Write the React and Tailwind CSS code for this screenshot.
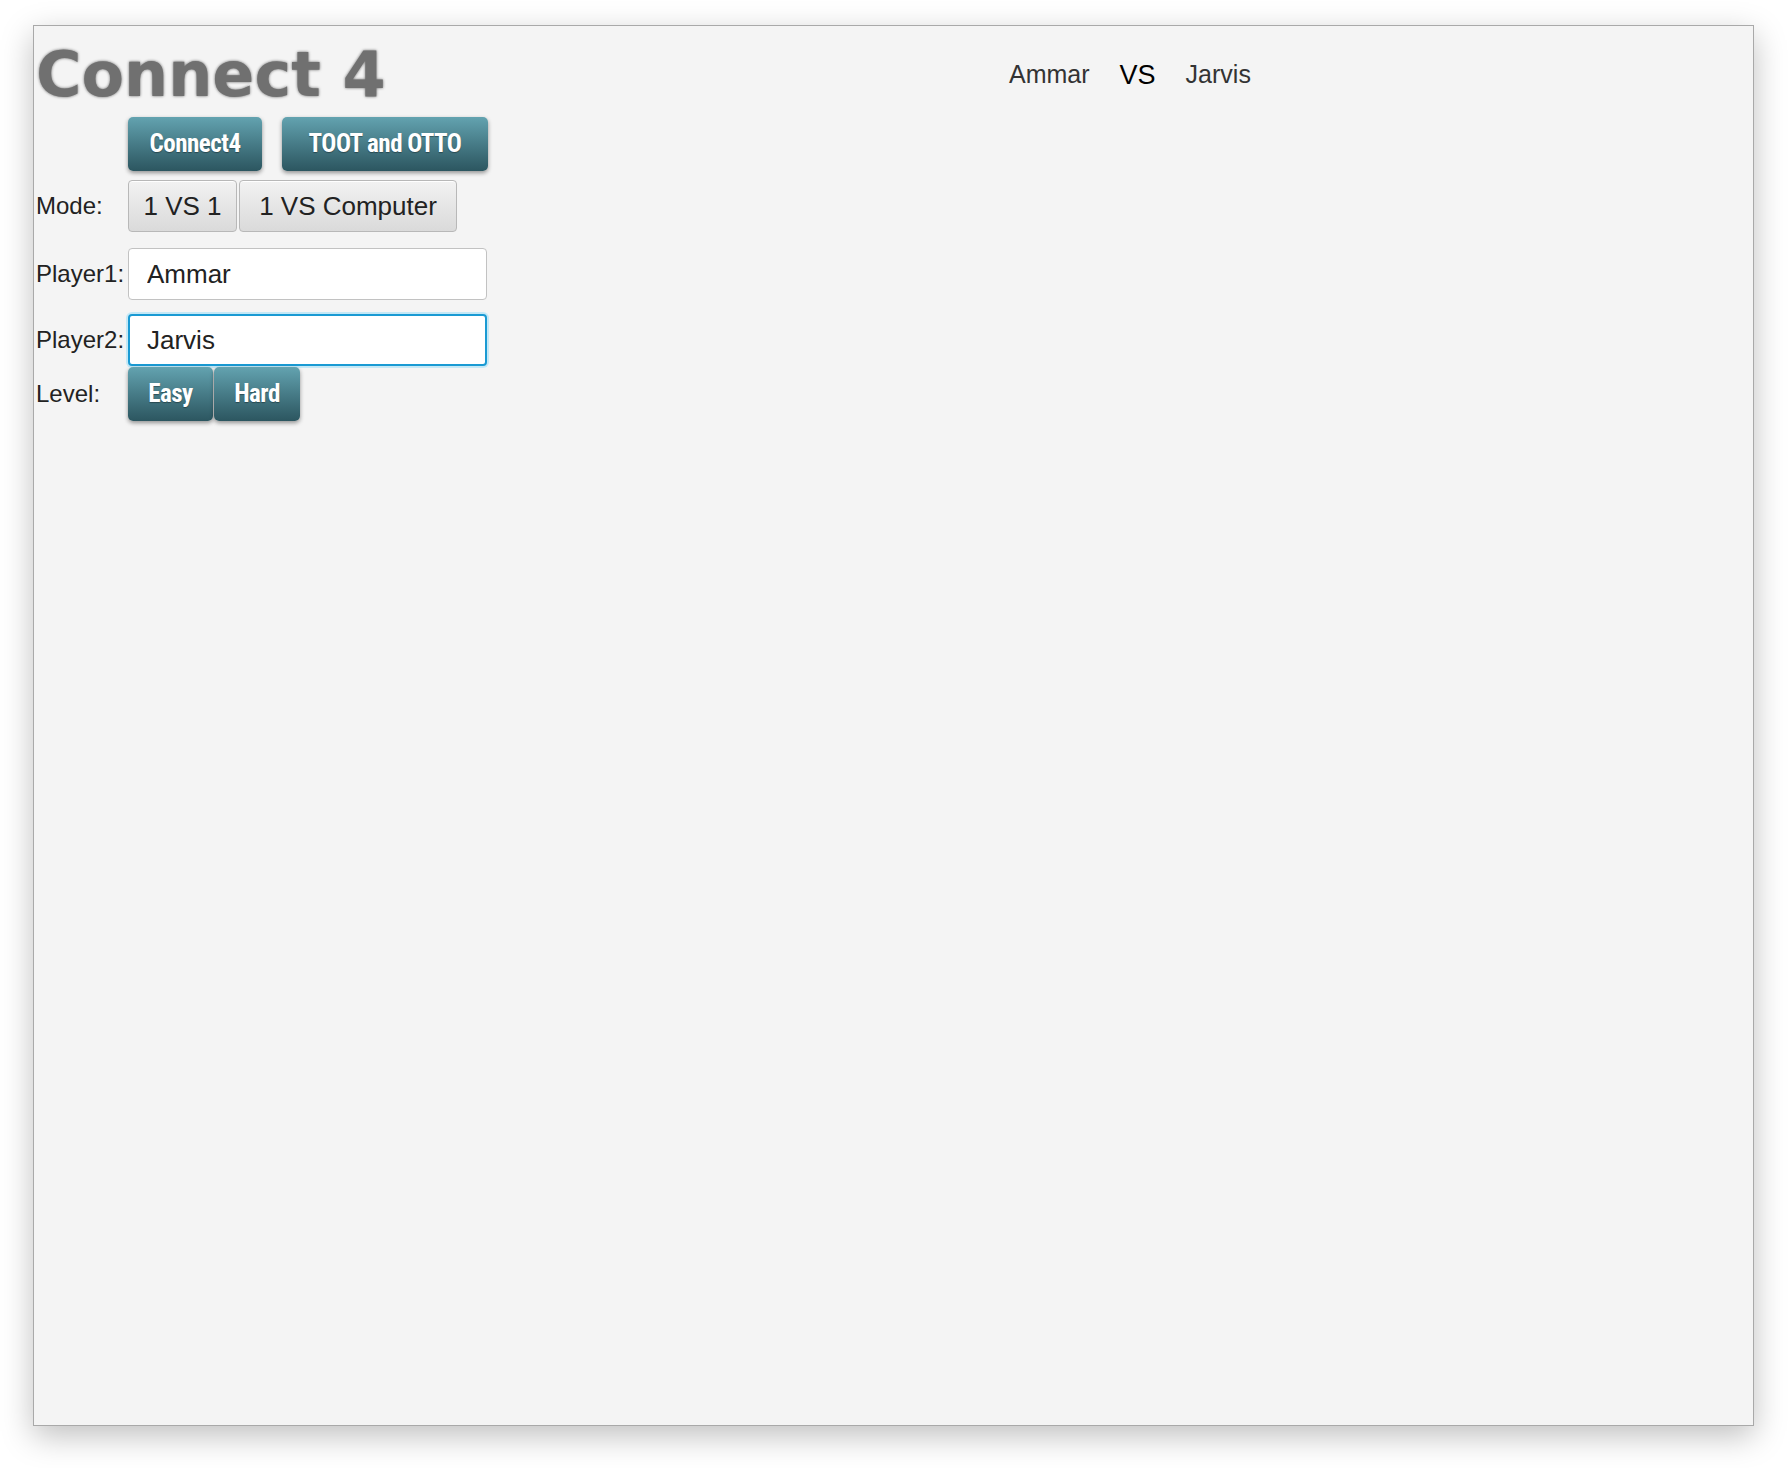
import { useState } from "react";

const tealBtn =
  "h-[54px] rounded-[5px] bg-gradient-to-b from-[#63a3b0] to-[#2c5660] text-white font-bold text-[25px] tracking-[-0.5px] shadow-[0_2px_4px_rgba(0,0,0,0.4)] [text-shadow:0_1px_1px_rgba(0,0,0,0.35)] font-['Liberation_Sans_Narrow','Roboto_Condensed','Liberation_Sans',sans-serif]";

const grayBtn =
  "h-[52px] rounded-[4px] border border-[#b8b8b8] bg-gradient-to-b from-[#f2f2f2] to-[#dadada] text-[#222] text-[26px] whitespace-nowrap shadow-[inset_0_1px_0_#fff]";

const App = () => {
    const [player1, setPlayer1] = useState("Ammar");
    const [player2, setPlayer2] = useState("Jarvis");

    return (
        <div className="min-h-screen bg-white font-['Liberation_Sans',Arial,sans-serif]">
            <div className="ml-[33px] pt-[25px]">
                <div className="w-[1721px] h-[1401px] border border-[#a9a9a9] bg-[#f4f4f4] shadow-[0_10px_30px_rgba(0,0,0,0.25)] pl-[2px]">
                    {/* header */}
                    <div className="mt-[18px] flex items-center">
                        <div className="w-[973px] h-[62px] leading-none text-[62px] font-bold text-[#707070] font-['DejaVu_Sans',sans-serif] [text-shadow:0_0_3px_rgba(0,0,0,0.6)]">
                            Connect 4
                        </div>
                        <div className="flex items-center gap-[30px] text-[25px] text-[#333]">
                            <span>Ammar</span>
                            <span className="text-[27px] text-black">VS</span>
                            <span>Jarvis</span>
                        </div>
                    </div>

                    {/* game buttons */}
                    <div className="mt-[11px] pl-[92px] flex gap-[20px]">
                        <button className={`${tealBtn} w-[134px]`}>Connect4</button>
                        <button className={`${tealBtn} w-[206px]`}>TOOT and OTTO</button>
                    </div>

                    {/* mode */}
                    <div className="mt-[9px] flex items-center text-[24px] text-[#222]">
                        <span className="w-[92px]">Mode:</span>
                        <div className="flex gap-[2px]">
                            <button className={`${grayBtn} w-[109px]`}>1 VS 1</button>
                            <button className={`${grayBtn} w-[218px]`}>1 VS Computer</button>
                        </div>
                    </div>

                    <div className="mt-[16px] flex items-center text-[24px] text-[#222]">
                        <span className="w-[92px]">Player1:</span>
                        <input
                            value={player1}
                            onChange={(e) => setPlayer1(e.target.value)}
                            className="w-[359px] h-[52px] rounded-[4px] border border-[#c2c2c2] bg-white px-[18px] text-[26px] text-[#222] outline-none"
                        />
                    </div>

                    <div className="mt-[14px] flex items-center text-[24px] text-[#222]">
                        <span className="w-[92px]">Player2:</span>
                        <input
                            value={player2}
                            onChange={(e) => setPlayer2(e.target.value)}
                            className="w-[359px] h-[52px] rounded-[4px] border-2 border-[#1a9ad3] bg-white px-[17px] text-[26px] text-[#222] outline-none shadow-[0_0_0_2px_#c4e8f6]"
                        />
                    </div>

                    <div className="mt-[1px] flex items-center text-[24px] text-[#222]">
                        <span className="w-[92px]">Level:</span>
                        <div className="flex gap-[1px]">
                            <button className={`${tealBtn} w-[85px]`}>Easy</button>
                            <button className={`${tealBtn} w-[86px]`}>Hard</button>
                        </div>
                    </div>
                </div>
            </div>
        </div>
    );
};

export default App;
